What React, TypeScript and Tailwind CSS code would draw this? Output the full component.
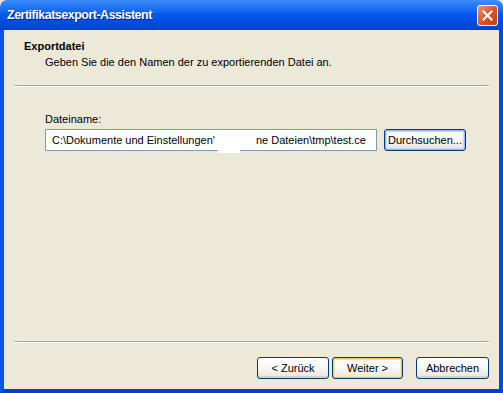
import React from "react";

const font = { fontFamily: '"Liberation Sans", Arial, sans-serif' };

function XpButton({ label, variant = "normal", className = "" }: { label: string; variant?: "normal" | "default" | "focus"; className?: string }) {
  const inner =
    variant === "default"
      ? "shadow-[inset_0_0_0_1px_#f6c45b,inset_0_0_0_2px_#fbe3a6]"
      : variant === "focus"
      ? "shadow-[inset_0_0_0_1px_#9ab8f3,inset_0_0_0_2px_#c6d7fb]"
      : "shadow-[inset_0_-2px_0_0_#d6d0c5]";
  return (
    <div
      className={`flex items-center justify-center rounded-[3px] border border-[#003c74] bg-gradient-to-b from-white via-[#f7f7f4] to-[#e6e4dc] text-[11px] text-black ${inner} ${className}`}
    >
      {label}
    </div>
  );
}

export default function App() {
  return (
    <div className="w-[503px] h-[393px] flex flex-col overflow-hidden bg-[#ece9d8]" style={font}>
      {/* Title bar */}
      <div className="h-[30px] flex items-center justify-between rounded-t-[7px] pl-[7px] pr-[5px] bg-gradient-to-b from-[#3d8dfb] via-[#0058ee] to-[#0140cf]">
        <span className="text-white font-bold text-[12.5px] tracking-[-0.5px] [text-shadow:1px_1px_0_#0a1f7a]">
          Zertifikatsexport-Assistent
        </span>
        <div className="w-[21px] h-[21px] rounded-[3px] border border-white bg-gradient-to-br from-[#e9906f] via-[#d9572e] to-[#c13d18] flex items-center justify-center">
          <svg width="11" height="11" viewBox="0 0 11 11">
            <path d="M1.5 1.5 L9.5 9.5 M9.5 1.5 L1.5 9.5" stroke="white" strokeWidth="2" strokeLinecap="square" />
          </svg>
        </div>
      </div>

      {/* Body with XP blue frame */}
      <div className="flex-1 flex flex-col border-l-4 border-r-4 border-b-4 border-l-[#0756e6] border-r-[#0449d8] border-b-[#0a3bc9] text-[11px] text-black">
        {/* Header */}
        <div className="pt-[9px] pl-[20px] font-bold leading-[14px]">Exportdatei</div>
        <div className="pt-[2px] pl-[41px] leading-[14px]">Geben Sie die den Namen der zu exportierenden Datei an.</div>
        <div className="mt-[16px] mx-[10px] h-[2px] border-t border-t-[#aca899] border-b border-b-white" />

        {/* Content */}
        <div className="pt-[25px] pl-[41px] leading-[14px]">Dateiname:</div>
        <div className="mt-[3px] pl-[41px] flex items-center gap-[7px]">
          <div className="relative w-[332px] h-[22px] border border-[#7f9db9] bg-white flex items-center pl-[6px] whitespace-nowrap">
            <div className="w-full overflow-hidden flex">
              <span>C:\Dokumente und Einstellungen'</span>
              <span className="ml-[41px]">ne Dateien\tmp\test.ce</span>
            </div>
            <div className="absolute left-[172px] top-[16px] w-[22px] h-[7px] bg-white" />
          </div>
          <XpButton label="Durchsuchen..." variant="focus" className="w-[82px] h-[22px]" />
        </div>

        <div className="flex-1" />

        {/* Footer */}
        <div className="mx-[10px] h-[2px] border-t border-t-[#aca899] border-b border-b-white" />
        <div className="mt-[14px] mb-[10px] pr-[10px] flex justify-end">
          <XpButton label="< Zurück" className="w-[72px] h-[22px]" />
          <XpButton label="Weiter >" variant="default" className="ml-[3px] w-[71px] h-[22px]" />
          <XpButton label="Abbrechen" className="ml-[13px] w-[73px] h-[22px]" />
        </div>
      </div>
    </div>
  );
}
